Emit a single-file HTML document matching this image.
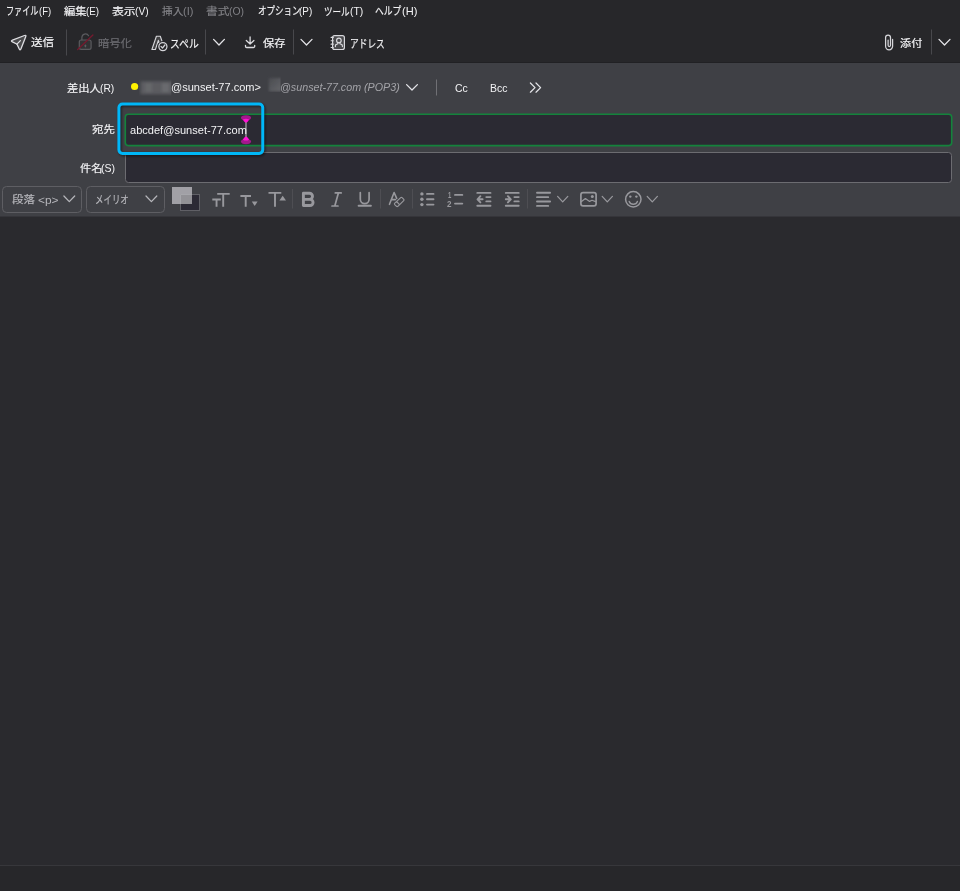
<!DOCTYPE html>
<html lang="ja"><head><meta charset="utf-8"><title>作成</title>
<style>
*{box-sizing:border-box;margin:0;padding:0}
html,body{width:960px;height:891px;overflow:hidden;background:#2a2a2e}
body{font-family:"Liberation Sans","Noto Sans CJK JP",sans-serif;font-size:12px;color:#f3f3f5;position:relative}
.abs{position:absolute}
.t{position:absolute;line-height:16px;white-space:nowrap;transform-origin:0 0;display:block;}
.b{-webkit-text-stroke:0.18px currentColor}
#top{left:0;top:0;width:960px;height:62px;background:#27272a}
#tbline{left:0;top:62px;width:960px;height:1px;background:#212124}
#headers{left:0;top:63px;width:960px;height:153px;background:#3f4045}
#hline{left:0;top:216px;width:960px;height:1px;background:#35353a}
#editor{left:0;top:217px;width:960px;height:648px;background:#2a2a2e}
#sline{left:0;top:865px;width:960px;height:1px;background:#37373b}
#status{left:0;top:866px;width:960px;height:25px;background:#27272a}
#ov{position:absolute;left:0;top:0;width:960px;height:891px}
</style></head><body>
<div id="top" class="abs"></div>
<div id="tbline" class="abs"></div>
<div id="headers" class="abs"></div>
<div id="hline" class="abs"></div>
<div id="editor" class="abs"></div>
<div id="sline" class="abs"></div>
<div id="status" class="abs"></div>
<svg id="ov" width="960" height="891" viewBox="0 0 960 891" fill="none">
<defs>
<filter id="blur2" x="-20%" y="-20%" width="140%" height="140%"><feGaussianBlur stdDeviation="1.6"/></filter>
<filter id="blur1" x="-20%" y="-20%" width="140%" height="140%"><feGaussianBlur stdDeviation="0.8"/></filter>
<filter id="blur3" x="-20%" y="-20%" width="140%" height="140%"><feGaussianBlur stdDeviation="1.3"/></filter>
</defs>
<!-- toolbar separators -->
<g stroke="#48484c" stroke-width="1">
<path d="M66.5 29.5V55.5M205.5 29.5V54.5M293.5 29.5V54.5M931.5 29.5V54.5"/>
</g>
<!-- send -->
<g stroke="#dedee2" stroke-width="1.3" stroke-linejoin="round" stroke-linecap="round">
<path d="M12.37 41.87Q10.40 40.90 12.45 40.11L24.45 35.49Q26.50 34.70 25.70 36.75L21.00 48.85Q20.20 50.90 19.24 48.92L17.25 44.82Q16.90 44.10 16.18 43.75Z" fill="#fff" fill-opacity="0.17"/>
<path d="M16.9 44.1 20.4 40.6"/>
</g>
<!-- lock disabled -->
<g stroke="#5b5b5f" stroke-width="1.2" stroke-linecap="round">
<rect x="79.3" y="40" width="11.8" height="9.4" rx="1.9" fill="#fff" fill-opacity="0.05"/>
<path d="M81.9 39.8V37.6a3.6 3.6 0 0 1 6.7-1.9"/>
<path d="M85.4 45.2v1.4" stroke-width="1.6"/>
</g>
<path d="M77.7 49.6 92.9 34.9" stroke="#741a2e" stroke-width="1.4" stroke-linecap="round"/>
<!-- spell -->
<g stroke="#d6d6da" stroke-width="1.1" stroke-linejoin="round">
<path d="M151.9 49.5 156.4 36.3H160.3L164.8 49.5H161.4L158.35 40.3 155.4 49.5Z" fill="#fff" fill-opacity="0.12"/>
<circle cx="162.9" cy="46.6" r="5.5" fill="#27272a" stroke="none"/>
<circle cx="162.9" cy="46.6" r="4.05" fill="#27272a" stroke-width="1.25"/>
<path d="M161 46.4 162.5 48 164.9 45" stroke-linecap="round" stroke-width="1.25"/>
</g>
<!-- chevrons toolbar -->
<g stroke="#e4e4e8" stroke-width="1.3" stroke-linecap="round" stroke-linejoin="round">
<path d="M213.6 39.4 219 45 224.4 39.4"/>
<path d="M301 39.4 306.5 45 312 39.4"/>
<path d="M939 39.4 944.5 45 950 39.4"/>
</g>
<!-- save -->
<g stroke="#dcdce0" stroke-width="1.3" stroke-linecap="round" stroke-linejoin="round">
<path d="M250.1 37V43.8M246.3 40.5 250.1 44 253.9 40.5"/>
<path d="M245.5 45.3V46.3a1.2 1.2 0 0 0 1.2 1.2h6.8a1.2 1.2 0 0 0 1.2-1.2V45.3"/>
</g>
<!-- address book -->
<g stroke="#d8d8dc" stroke-width="1.2" stroke-linecap="round" stroke-linejoin="round">
<rect x="332.6" y="35.6" width="11.8" height="13.9" rx="2" fill="#fff" fill-opacity="0.16"/>
<path d="M331.1 37.4h2.2M331.1 40.8h2.2M331.1 44.15h2.2M331.1 47.5h2.2" stroke-width="1.1"/>
<circle cx="338.9" cy="40.4" r="2.3"/>
<path d="M335.4 46.6v-0.7q0-1.1 1-1.5l0.9-0.35q0.6-0.25 0.6-0.9v-0.5M342.4 46.6v-0.7q0-1.1-1-1.5l-0.9-0.35q-0.6-0.25-0.6-0.9v-0.5"/>
</g>
<!-- clip -->
<path d="M892.6 39.4V46.3a3.5 3.5 0 0 1-7 0V37.5a2.45 2.45 0 0 1 4.9 0V45.3a1.2 1.2 0 0 1-2.4 0V40" stroke="#d6d6da" stroke-width="1.25" stroke-linecap="round"/>
<!-- from row -->
<circle cx="134.6" cy="86.5" r="3.6" fill="#fff200"/>
<clipPath id="c1"><rect x="139" y="79.3" width="32.3" height="16.4"/></clipPath>
<g clip-path="url(#c1)"><g filter="url(#blur2)">
<rect x="140.5" y="81.3" width="34" height="13" fill="#5b5c60"/>
<rect x="145" y="83" width="7" height="9" fill="#66676b"/>
<rect x="162" y="83" width="7" height="9" fill="#696a6e"/>
</g></g>
<linearGradient id="g2" x1="0" y1="0" x2="1" y2="1"><stop offset="0" stop-color="#4a4b50"/><stop offset="1" stop-color="#66676b"/></linearGradient>
<clipPath id="c2"><rect x="267" y="76" width="13.5" height="16"/></clipPath>
<g clip-path="url(#c2)"><rect x="268.8" y="78" width="14" height="13.4" fill="url(#g2)" filter="url(#blur1)"/></g>
<path d="M406.6 84.6 412 90 417.4 84.6" stroke="#e4e4e8" stroke-width="1.3" stroke-linecap="round" stroke-linejoin="round"/>
<path d="M436.5 79.5V95.5" stroke="#707075" stroke-width="1"/>
<path d="M530.4 83 535 87.6 530.4 92.2M536 83 540.6 87.6 536 92.2" stroke="#e4e4e8" stroke-width="1.25" stroke-linecap="round" stroke-linejoin="round"/>
<!-- inputs -->
<rect x="125.5" y="152.5" width="826" height="30" rx="3" fill="#2b2a33" stroke="#6c6c71"/>
<rect x="125.3" y="114.3" width="826.4" height="31.3" rx="3" fill="#2b2a33" stroke="#14833c" stroke-width="1.6"/>
<!-- highlight -->
<rect x="120.1" y="105.2" width="143.85" height="49.4" rx="3.6" stroke="#000" stroke-opacity="0.42" stroke-width="3.6" filter="url(#blur3)"/>
<rect x="118.9" y="104" width="143.85" height="49.4" rx="3.6" stroke="#00b7f8" stroke-width="3"/>
<!-- caret -->
<path d="M246 122V137.2" stroke="#7b7b80" stroke-width="1.9"/>
<ellipse cx="246" cy="117.7" rx="5.05" ry="2.55" fill="#a3178c"/>
<path d="M242.9 119.6Q246 117.9 249.1 119.6Q248.6 121.2 246.8 122.5H245.2Q243.4 121.2 242.9 119.6Z" fill="#ff12d4"/>
<ellipse cx="246" cy="141.6" rx="5.05" ry="2.55" fill="#a3178c"/>
<path d="M242.9 139.7Q246 141.4 249.1 139.7Q248.6 138.1 246.8 136.8H245.2Q243.4 138.1 242.9 139.7Z" fill="#ff12d4"/>
<!-- format toolbar -->
<g stroke="#5e5e63" fill="none">
<rect x="2.5" y="186.5" width="79" height="26" rx="4"/>
<rect x="86.5" y="186.5" width="78" height="26" rx="4"/>
</g>
<g stroke="#b6b6bb" stroke-width="1.25" stroke-linecap="round" stroke-linejoin="round">
<path d="M63.9 196 69.3 201.6 74.7 196"/>
<path d="M146 196 151.4 201.6 156.8 196"/>
</g>
<!-- colour squares -->
<rect x="180.5" y="194.5" width="19" height="16" fill="#2c2a35" stroke="#606066"/>
<rect x="172" y="187" width="20" height="17" fill="#a1a0a6"/>
<rect x="180" y="194" width="12" height="10" fill="#929196"/>
<path d="M180.5 204V194.5H192" stroke="#a6a6ab"/>
<g stroke="#4e4e53"><path d="M292.5 189V208.5M380.5 189V208.5M412.5 189V208.5M527.5 189V208.5"/></g>
<g stroke="#98989d" stroke-width="1.9" fill="none">
<!-- Tt -->
<path d="M212.3 199.5H220.8M216.55 199.5V206.8M217.2 193.9H229.7M223.2 193.9V206.8"/>
<path d="M240.4 196H251M245.7 196V206.8"/>
<path d="M268.5 192.9H281.3M275 192.9V206.8"/>
</g>
<path d="M251.8 201.6H257.6L254.7 205.9Z" fill="#98989d"/>
<path d="M279.4 200.6H286L282.7 195.8Z" fill="#98989d"/>
<!-- B I U -->
<path d="M303.4 193.2H309.4a3.1 3.1 0 0 1 0 6.2H303.4ZM303.4 199.4H310a3.05 3.05 0 0 1 0 6.1H303.4Z" stroke="#98989d" stroke-width="2.9" stroke-linejoin="round"/>
<g stroke="#98989d" stroke-width="1.7" stroke-linecap="round">
<path d="M335.3 192.9H341.2M332 206H338M338.4 192.9 334.8 206"/>
<path d="M360.3 192.6V199.2a4.4 4.4 0 0 0 8.8 0V192.6"/>
<path d="M358.6 205.7H370.9" stroke-width="1.9"/>
</g>
<!-- A eraser -->
<g stroke="#98989d" stroke-linecap="round" stroke-linejoin="round">
<path d="M389.5 204.3 394.1 192.5 396.7 198.3M391.6 199.6H395.4" stroke-width="1.6"/>
<path d="M400.7 197.6Q401.4 197 402.1 197.6L403.8 199.3Q404.4 200 403.7 200.7L397.9 206.3Q397.2 206.9 396.5 206.3L394.7 204.6Q394.1 203.9 394.8 203.2ZM396.6 201.5 399.5 204.7" stroke-width="1.15"/>
</g>
<!-- bullets -->
<g fill="#98989d"><circle cx="421.9" cy="193.9" r="1.7"/><circle cx="421.9" cy="199.3" r="1.7"/><circle cx="421.9" cy="204.6" r="1.7"/></g>
<g stroke="#98989d" stroke-width="1.9" stroke-linecap="round">
<path d="M427 193.9H433.5M427 199.3H433.5M427 204.6H433.5"/>
<path d="M455 194.9H462.3M455 203.6H462.3"/>
</g>
<!-- outdent / indent -->
<g stroke="#98989d" stroke-width="1.9" stroke-linecap="round" stroke-linejoin="round">
<path d="M477.3 192.9H490.5M477.3 205.8H490.5M486.3 197.1H490.5M486.3 201.4H490.5M477.8 199.3H482.6M480.4 196.2 477.5 199.3 480.4 202.4"/>
<path d="M505.8 192.9H518.7M505.8 205.8H518.7M514.4 197.1H518.7M514.4 201.4H518.7M505.8 199.3H510.6M507.9 196.2 510.8 199.3 507.9 202.4"/>
<path d="M537 192.8H550.1M537 197.15H548.2M537 201.5H550.1M537 205.9H548.2"/>
</g>
<g stroke="#98989d" stroke-width="1.25" stroke-linecap="round" stroke-linejoin="round">
<path d="M557.6 196.4 562.7 201.9 567.8 196.4"/>
<path d="M602.2 196.4 607.3 201.9 612.4 196.4"/>
<path d="M647.2 196.4 652.3 201.9 657.4 196.4"/>
</g>
<!-- image -->
<g stroke="#98989d" stroke-width="1.7" stroke-linejoin="round" stroke-linecap="round">
<rect x="580.9" y="192.6" width="15.2" height="13.3" rx="2.2"/>
<path d="M581.5 201.6 585.4 198.6 589.6 201.4 592 200.3 595.6 201.6" stroke-width="1.2"/>
</g>
<circle cx="592.3" cy="196.4" r="1.5" fill="#98989d"/>
<!-- smiley -->
<circle cx="633.3" cy="199.3" r="7.7" stroke="#98989d" stroke-width="1.5"/>
<circle cx="630.3" cy="196.6" r="1.2" fill="#98989d"/><circle cx="636.4" cy="196.6" r="1.2" fill="#98989d"/>
<path d="M629.2 201.4a4.4 4.4 0 0 0 8.2 0" stroke="#98989d" stroke-width="1.4" stroke-linecap="round"/>
</svg>

<span class="t b" style="left:5.58px;top:2.60px;font-size:11.30px;color:#f3f3f5;transform:scaleX(0.7156)">ファイル</span>
<span class="t" style="left:38.63px;top:3.20px;font-size:11.80px;color:#f3f3f5;transform:scaleX(0.8000)">(F)</span>
<span class="t b" style="left:64.03px;top:3.85px;font-size:10.40px;color:#f3f3f5;transform:scaleX(1.0864)">編集</span>
<span class="t" style="left:86.46px;top:3.20px;font-size:11.80px;color:#f3f3f5;transform:scaleX(0.8281)">(E)</span>
<span class="t b" style="left:111.93px;top:3.85px;font-size:10.40px;color:#f3f3f5;transform:scaleX(1.1392)">表示</span>
<span class="t" style="left:134.95px;top:3.20px;font-size:11.80px;color:#f3f3f5;transform:scaleX(0.8702)">(V)</span>
<span class="t b" style="left:161.66px;top:3.85px;font-size:10.40px;color:#808085;transform:scaleX(1.0272)">挿入</span>
<span class="t" style="left:183.20px;top:3.20px;font-size:11.80px;color:#808085;transform:scaleX(0.9333)">(I)</span>
<span class="t b" style="left:206.14px;top:3.85px;font-size:10.40px;color:#808085;transform:scaleX(1.1250)">書式</span>
<span class="t" style="left:229.26px;top:3.20px;font-size:11.80px;color:#808085;transform:scaleX(0.8825)">(O)</span>
<span class="t b" style="left:257.56px;top:2.60px;font-size:11.30px;color:#f3f3f5;transform:scaleX(0.7543)">オプション</span>
<span class="t" style="left:299.42px;top:3.20px;font-size:11.80px;color:#f3f3f5;transform:scaleX(0.8421)">(P)</span>
<span class="t b" style="left:324.05px;top:3.60px;font-size:11.30px;color:#f3f3f5;transform:scaleX(0.7566)">ツール</span>
<span class="t" style="left:349.74px;top:3.20px;font-size:11.80px;color:#f3f3f5;transform:scaleX(0.8800)">(T)</span>
<span class="t b" style="left:374.95px;top:2.60px;font-size:11.30px;color:#f3f3f5;transform:scaleX(0.7758)">ヘルプ</span>
<span class="t" style="left:402.24px;top:3.20px;font-size:11.80px;color:#f3f3f5;transform:scaleX(0.9400)">(H)</span>
<span class="t b" style="left:31.11px;top:35.15px;font-size:10.40px;color:#f3f3f5;transform:scaleX(1.1100)">送信</span>
<span class="t b" style="left:97.56px;top:36.15px;font-size:10.40px;color:#6c6c71;transform:scaleX(1.0878)">暗号化</span>
<span class="t b" style="left:169.84px;top:35.90px;font-size:11.30px;color:#f3f3f5;transform:scaleX(0.8672)">スペル</span>
<span class="t b" style="left:263.03px;top:36.15px;font-size:10.40px;color:#f3f3f5;transform:scaleX(1.0840)">保存</span>
<span class="t b" style="left:349.84px;top:35.90px;font-size:11.30px;color:#f3f3f5;transform:scaleX(0.7696)">アドレス</span>
<span class="t b" style="left:900.47px;top:36.15px;font-size:10.40px;color:#f3f3f5;transform:scaleX(1.0747)">添付</span>
<span class="t b" style="left:66.86px;top:81.45px;font-size:10.40px;color:#f3f3f5;transform:scaleX(1.0876)">差出人</span>
<span class="t" style="left:100.39px;top:79.80px;font-size:11.80px;color:#f3f3f5;transform:scaleX(0.8733)">(R)</span>
<span class="t" style="left:171.06px;top:79.35px;font-size:11.80px;color:#f3f3f5;transform:scaleX(0.9351)">@sunset-77.com&gt;</span>
<span class="t" style="left:279.82px;top:78.55px;font-size:11.80px;color:#a3a3a8;font-style:italic;transform:scaleX(0.9075)">@sunset-77.com (POP3)</span>
<span class="t" style="left:454.94px;top:80.10px;font-size:11.21px;color:#f3f3f5;transform:scaleX(0.9317)">Cc</span>
<span class="t" style="left:489.77px;top:80.10px;font-size:11.21px;color:#f3f3f5;transform:scaleX(0.9314)">Bcc</span>
<span class="t b" style="left:91.53px;top:122.35px;font-size:10.40px;color:#f3f3f5;transform:scaleX(1.0950)">宛先</span>
<span class="t" style="left:129.53px;top:122.15px;font-size:11.80px;color:#f3f3f5;transform:scaleX(0.9368)">abcdef@sunset-77.com</span>
<span class="t b" style="left:80.03px;top:161.05px;font-size:10.40px;color:#f3f3f5;transform:scaleX(1.0744)">件名</span>
<span class="t" style="left:101.39px;top:160.30px;font-size:11.80px;color:#f3f3f5;transform:scaleX(0.8947)">(S)</span>
<span class="t b" style="left:11.75px;top:192.25px;font-size:10.40px;color:#b6b6bb;transform:scaleX(1.1058)">段落</span>
<span class="t" style="left:37.90px;top:191.50px;font-size:11.80px;color:#b6b6bb;transform:scaleX(1.0078)">&lt;p&gt;</span>
<span class="t b" style="left:95.36px;top:192.00px;font-size:11.30px;color:#b6b6bb;transform:scaleX(0.7485)">メイリオ</span>
<span class="t" style="left:447.93px;top:186.50px;font-size:34.40px;line-height:64px;color:#98989d;font-weight:bold;transform:scale(0.1732,0.25)">1</span>
<span class="t" style="left:447.36px;top:195.60px;font-size:34.40px;line-height:64px;color:#98989d;font-weight:bold;transform:scale(0.2353,0.25)">2</span>

</body></html>
